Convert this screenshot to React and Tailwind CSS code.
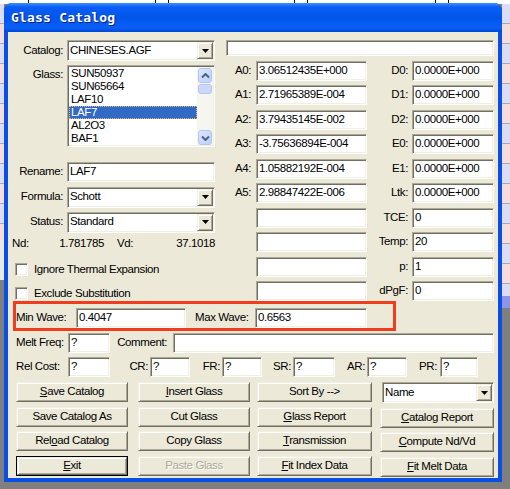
import React from "react";

const sunken =
  "bg-white border border-t-[#aca899] border-l-[#aca899] border-b-white border-r-white shadow-[inset_1px_1px_0_#716f64,inset_-1px_-1px_0_#f1efe2]";
const raised =
  "bg-[#ece9d8] border border-t-[#f1efe2] border-l-[#f1efe2] border-b-[#716f64] border-r-[#716f64] shadow-[inset_1px_1px_0_#ffffff,inset_-1px_-1px_0_#aca899]";

const Field = ({ value = "", className = "" }) => (
  <div className={`${sunken} h-[20px] flex items-center pl-[2px] overflow-hidden whitespace-nowrap ${className}`}>
    {value}
  </div>
);

const DropBtn = () => (
  <div className={`${raised} w-[16px] h-[17px] flex items-center justify-center`}>
    <svg width="7" height="4" viewBox="0 0 7 4">
      <path d="M0 0h7L3.5 4z" fill="#000" />
    </svg>
  </div>
);

const Combo = ({ value, className = "" }) => (
  <div className={`${sunken} h-[21px] flex items-center justify-between pl-[2px] pr-[1px] ${className}`}>
    <span>{value}</span>
    <DropBtn />
  </div>
);

const Check = ({ label }) => (
  <div className="flex items-center h-[13px]">
    <div className={`${sunken} ml-[3px] w-[13px] h-[13px]`} />
    <span className="ml-[6px]">{label}</span>
  </div>
);

const Chevron = ({ down }) => (
  <svg width="9" height="6" viewBox="0 0 9 6">
    <path
      d={down ? "M1 1.5L4.5 5L8 1.5" : "M1 4.5L4.5 1L8 4.5"}
      fill="none"
      stroke="#4d6185"
      strokeWidth="2"
    />
  </svg>
);

const scrollBtn =
  "h-[15px] mx-[1px] rounded-[3px] border border-[#b3c6f3] bg-[linear-gradient(135deg,#dce7ff,#bdd0fa)] flex items-center justify-center";

const Btn = ({ children, def = false, disabled = false }) => {
  const text = disabled ? "text-[#aca899] [text-shadow:1px_1px_0_#fff]" : "text-black";
  if (def) {
    return (
      <div className="h-[20px] border border-black">
        <div className={`${raised} h-full flex items-center justify-center ${text}`}>{children}</div>
      </div>
    );
  }
  return <div className={`${raised} h-[20px] flex items-center justify-center ${text}`}>{children}</div>;
};

const glasses = ["SUN50937", "SUN65664", "LAF10", "LAF7", "AL2O3", "BAF1"];

const rows = [
  ["A0:", "3.06512435E+000", "D0:", "0.0000E+000"],
  ["A1:", "2.71965389E-004", "D1:", "0.0000E+000"],
  ["A2:", "3.79435145E-002", "D2:", "0.0000E+000"],
  ["A3:", "-3.75636894E-004", "E0:", "0.0000E+000"],
  ["A4:", "1.05882192E-004", "E1:", "0.0000E+000"],
  ["A5:", "2.98847422E-006", "Ltk:", "0.0000E+000"],
  ["", "", "TCE:", "0"],
  ["", "", "Temp:", "20"],
  ["", "", "p:", "1"],
  ["", "", "dPgF:", "0"],
];

const lines = [28, 155, 168, 294, 307, 435, 448];

export default function App() {
  return (
    <div className="relative w-[510px] h-[489px] overflow-hidden bg-[#7f7f7f] font-['Liberation_Sans',Arial,sans-serif] text-[11.5px] tracking-[-0.4px] text-black">
      {/* desktop behind the dialog */}
      <div className="absolute inset-x-0 top-0 h-[4px] bg-white">
        {lines.map((x) => (
          <div key={x} className="absolute top-0 h-full w-px bg-black" style={{ left: x }} />
        ))}
      </div>
      <div className="absolute left-0 top-[4px] w-[4px] h-[236px] bg-[image:repeating-linear-gradient(180deg,#dcdcf6_0px,#dcdcf6_19px,#a8a8b8_19px,#a8a8b8_20px,#f6dcdc_20px,#f6dcdc_39px,#a8a8b8_39px,#a8a8b8_40px)]" />
      <div className="absolute left-0 top-[240px] w-[4px] h-[40px] bg-[#e8e8e8]" />
      <div className="absolute right-0 top-[4px] w-[8px] h-[292px] bg-[image:repeating-linear-gradient(180deg,#dcdcf6_0px,#dcdcf6_19px,#a8a8b8_19px,#a8a8b8_20px,#f6dcdc_20px,#f6dcdc_39px,#a8a8b8_39px,#a8a8b8_40px)]" />
      <div className="absolute right-0 top-[296px] w-[8px] h-[12px] bg-[#8c96e8]" />

      {/* dialog window */}
      <div className="absolute left-[4px] top-[3px] w-[498px] h-[479px] flex flex-col rounded-t-[8px] bg-[#0a4ee4] overflow-hidden">
        <div className="h-[29px] shrink-0 flex items-center pl-[7px] bg-[linear-gradient(180deg,#3d8ffd_0%,#0a5ef6_14%,#0055ea_50%,#0a5ff7_86%,#0047d6_100%)]">
          <span className="font-['DejaVu_Sans_Mono',monospace] font-bold text-[13px] tracking-[0.2px] text-white [text-shadow:1px_1px_0_#0a1f80]">
            Glass Catalog
          </span>
        </div>

        <div className="flex-1 mx-[4px] mb-[4px] bg-[#ece9d8] pl-[4px] pr-[3px] pt-[8px] flex flex-col">
          {/* upper block */}
          <div className="flex h-[265.5px]">
            {/* left column */}
            <div className="w-[203px] flex flex-col">
              <div className="flex items-center h-[21px]">
                <span className="w-[55px] text-right pr-[4px]">Catalog:</span>
                <Combo value="CHINESES.AGF" className="w-[148px]" />
              </div>
              <div className="flex items-start mt-[4px]">
                <span className="w-[55px] text-right pr-[4px] pt-[3px] leading-[13px]">Glass:</span>
                <div className={`${sunken} p-[1px] w-[148px] h-[82px] flex`}>
                  <div className="flex-1 flex flex-col">
                    {glasses.map((g) => (
                      <div
                        key={g}
                        className={`h-[13px] leading-[13px] pl-[2px] ${
                          g === "LAF7"
                            ? "bg-[#316ac5] text-white outline-1 outline-dotted outline-[#e8b878] -outline-offset-1"
                            : ""
                        }`}
                      >
                        {g}
                      </div>
                    ))}
                  </div>
                  <div className="w-[16px] bg-[#f6f5f0] flex flex-col justify-between pt-px">
                    <div>
                      <div className={scrollBtn}>
                        <Chevron />
                      </div>
                      <div className="h-[10px] mx-[1px] mt-[1px] rounded-[3px] border border-[#b3c6f3] bg-[#c9d8fc]" />
                    </div>
                    <div className={scrollBtn}>
                      <Chevron down />
                    </div>
                  </div>
                </div>
              </div>
              <div className="flex items-center h-[20px] mt-[15px]">
                <span className="w-[55px] text-right pr-[4px]">Rename:</span>
                <Field value="LAF7" className="w-[148px]" />
              </div>
              <div className="flex items-center h-[20px] mt-[5px]">
                <span className="w-[55px] text-right pr-[4px]">Formula:</span>
                <Combo value="Schott" className="w-[148px] h-[20px]" />
              </div>
              <div className="flex items-center h-[20px] mt-[5px]">
                <span className="w-[55px] text-right pr-[4px]">Status:</span>
                <Combo value="Standard" className="w-[148px] h-[20px]" />
              </div>
              <div className="flex items-center h-[14px] mt-[5px] whitespace-nowrap">
                <span className="w-[93px] flex justify-between">
                  <span>Nd:</span>
                  <span>1.781785</span>
                </span>
                <span className="ml-[13px] w-[99px] flex justify-between">
                  <span>Vd:</span>
                  <span>37.1018</span>
                </span>
              </div>
              <div className="mt-[12px]">
                <Check label="Ignore Thermal Expansion" />
              </div>
              <div className="mt-[11px]">
                <Check label="Exclude Substitution" />
              </div>
            </div>

            {/* coefficient columns */}
            <div className="ml-[10px] w-[269px] flex flex-col">
              <Field className="ml-[1px] w-[268px]" />
              <div className="mt-[5px] flex flex-col">
                {rows.map(([a, av, d, dv], i) => (
                  <div key={i} className="flex items-start h-[24.5px]">
                    <span className="w-[31px] h-[20px] flex items-center justify-end pr-[5px]">{a}</span>
                    <Field value={av} className="w-[111px]" />
                    <span className="w-[45px] h-[20px] flex items-center justify-end pr-[4px]">{d}</span>
                    <Field value={dv} className="w-[82px]" />
                  </div>
                ))}
              </div>
            </div>
          </div>

          {/* wavelength row, marked in red */}
          <div className="mt-[-4.5px] ml-[1px] w-[383px] h-[30px] border-[3px] border-[#f23c1e] flex items-start pt-[4px] relative">
            <span className="w-[60px] h-[19px] flex items-center">Min Wave:</span>
            <Field value="0.4047" className="w-[110px] h-[19px]" />
            <span className="w-[69px] h-[19px] flex items-center pl-[9px]">Max Wave:</span>
            <Field value="0.6563" className="w-[112px] h-[19px]" />
          </div>

          <div className="flex items-center h-[20px] mt-[2px] pl-[4px]">
            <span className="w-[52px]">Melt Freq:</span>
            <Field value="?" className="w-[42px]" />
            <span className="w-[63px] text-right pr-[6px]">Comment:</span>
            <Field className="w-[321px]" />
          </div>

          <div className="flex items-center h-[20px] mt-[4px] pl-[4px]">
            <span className="w-[52px]">Rel Cost:</span>
            <Field value="?" className="w-[42px]" />
            <span className="w-[40px] text-right pr-[2px]">CR:</span>
            <Field value="?" className="w-[40px]" />
            <span className="w-[32px] text-right pr-[2px]">FR:</span>
            <Field value="?" className="w-[40px]" />
            <span className="w-[31px] text-right pr-[2px]">SR:</span>
            <Field value="?" className="w-[42px]" />
            <span className="w-[32px] text-right pr-[2px]">AR:</span>
            <Field value="?" className="w-[40px]" />
            <span className="w-[33px] text-right pr-[3px]">PR:</span>
            <Field value="?" className="w-[38px]" />
          </div>

          {/* buttons */}
          <div className="flex mt-[5px] pl-[4px]">
            <div className="w-[112px] flex flex-col gap-[4.5px]">
              <Btn><span><u>S</u>ave Catalog</span></Btn>
              <Btn>Save Catalog As</Btn>
              <Btn><span>Rel<u>o</u>ad Catalog</span></Btn>
              <Btn def><span><u>E</u>xit</span></Btn>
            </div>
            <div className="ml-[10px] w-[112px] flex flex-col gap-[4.5px]">
              <Btn><span><u>I</u>nsert Glass</span></Btn>
              <Btn>Cut Glass</Btn>
              <Btn>Copy Glass</Btn>
              <Btn disabled>Paste Glass</Btn>
            </div>
            <div className="ml-[7px] w-[115px] flex flex-col gap-[4.5px]">
              <Btn>{"Sort By -->"}</Btn>
              <Btn><span><u>G</u>lass Report</span></Btn>
              <Btn><span><u>T</u>ransmission</span></Btn>
              <Btn><span><u>F</u>it Index Data</span></Btn>
            </div>
            <div className="ml-[8px] w-[114px] flex flex-col gap-[4.5px]">
              <Combo value="Name" className="ml-[2px] w-[112px] h-[20px]" />
              <Btn><span><u>C</u>atalog Report</span></Btn>
              <Btn><span><u>C</u>ompute Nd/Vd</span></Btn>
              <Btn><span><u>F</u>it Melt Data</span></Btn>
            </div>
          </div>
        </div>
      </div>
    </div>
  );
}
